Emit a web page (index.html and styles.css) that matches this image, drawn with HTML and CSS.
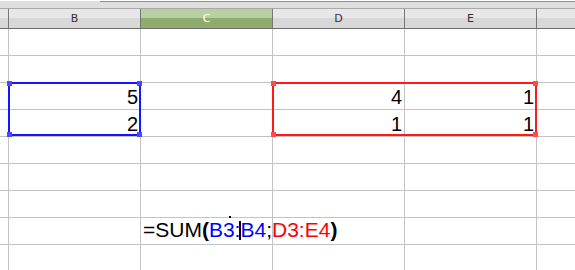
FILE: index.html
```html
<!DOCTYPE html>
<html lang="en">
<head>
  <meta charset="UTF-8" />
  <title>Sheet</title>
  <link rel="stylesheet" href="styles.css">
</head>
<body>
  <div class="topbar"><div class="topbar-edge"></div></div>

  <div class="col-headers">
    <div class="corner"></div>
    <div class="col-head">B</div>
    <div class="col-head active">C</div>
    <div class="col-head">D</div>
    <div class="col-head">E</div>
    <div class="col-head"></div>
  </div>

  <div class="sheet">
    <!-- row 1 -->
    <div class="rowhead"></div><div class="cell"></div><div class="cell"></div><div class="cell"></div><div class="cell"></div><div class="cell"></div>
    <!-- row 2 -->
    <div class="rowhead"></div><div class="cell"></div><div class="cell"></div><div class="cell"></div><div class="cell"></div><div class="cell"></div>
    <!-- row 3 -->
    <div class="rowhead"></div><div class="cell num">5</div><div class="cell"></div><div class="cell num">4</div><div class="cell num">1</div><div class="cell"></div>
    <!-- row 4 -->
    <div class="rowhead"></div><div class="cell num">2</div><div class="cell"></div><div class="cell num">1</div><div class="cell num">1</div><div class="cell"></div>
    <!-- row 5 -->
    <div class="rowhead"></div><div class="cell"></div><div class="cell"></div><div class="cell"></div><div class="cell"></div><div class="cell"></div>
    <!-- row 6 -->
    <div class="rowhead"></div><div class="cell"></div><div class="cell"></div><div class="cell"></div><div class="cell"></div><div class="cell"></div>
    <!-- row 7 -->
    <div class="rowhead"></div><div class="cell"></div><div class="cell"></div><div class="cell"></div><div class="cell"></div><div class="cell"></div>
    <!-- row 8: cell being edited -->
    <div class="rowhead"></div><div class="cell"></div>
    <div class="cell edit">
      <span class="formula">=SUM<b>(</b><span class="ref-b">B3:</span><span class="caret"></span><span class="ref-b">B4</span>;<span class="ref-r">D3:E4</span><b>)</b></span>
    </div>
    <div class="cell"></div><div class="cell"></div><div class="cell"></div>
    <!-- row 9 -->
    <div class="rowhead"></div><div class="cell"></div><div class="cell"></div><div class="cell"></div><div class="cell"></div><div class="cell"></div>

    <!-- range highlights -->
    <div class="range range-blue">
      <span class="handle tl"></span><span class="handle tr"></span><span class="handle bl"></span><span class="handle br"></span>
    </div>
    <div class="range range-red">
      <span class="handle tl"></span><span class="handle tr"></span><span class="handle bl"></span><span class="handle br"></span>
    </div>
    <div class="pointer-dot"></div>
  </div>
</body>
</html>
```

FILE: styles.css
```css
body {
  margin: 0;
  width: 575px;
  height: 270px;
  overflow: hidden;
  background: #fff;
  font-family: "Liberation Sans", Arial, sans-serif;
}

/* Strip above the column headers */
.topbar {
  height: 7px;
  background: #dfdfdf;
  border-bottom: 1px solid #a8a8a8;
}
.topbar-edge {
  margin-left: 100px;
  margin-top: 1px;
  border-top: 1px solid #8f8f8f;
}

/* Column headers */
.col-headers {
  display: grid;
  grid-template-columns: 8px repeat(4, 131px) 1fr;
  column-gap: 1px;
  background: #767676;
  border-bottom: 1px solid #6c6c6c;
  height: 19px;
}
.corner,
.col-head {
  background: linear-gradient(#e7e7e7 0, #e7e7e7 9px, #d8d8d8 9px);
  font-family: "DejaVu Sans", sans-serif;
  font-size: 11px;
  color: #333;
  text-align: center;
  line-height: 19px;
}
.col-head.active {
  background: linear-gradient(#b7cfa1 0, #b7cfa1 9px, #8dac6e 9px);
  color: #fff;
}

/* Cell grid */
.sheet {
  position: relative;
  display: grid;
  grid-template-columns: 8px repeat(4, 131px) 1fr;
  grid-auto-rows: 26px;
  gap: 1px;
  background: #c3c3c3;
}
.rowhead,
.cell {
  background: #fff;
}
.cell {
  font-size: 20px;
  color: #000;
  white-space: nowrap;
}
.num {
  display: flex;
  justify-content: flex-end;
  align-items: flex-end;
  padding-right: 2px;
  line-height: 20px;
  padding-bottom: 2px;
}

/* Cell in edit mode, text spills into the next columns */
.edit {
  position: relative;
  z-index: 2;
  overflow: visible;
  padding-left: 2px;
  font-size: 21px;
  line-height: 23px;
}
.formula b {
  font-weight: bold;
}
.ref-b { color: #0000ff; }
.ref-r { color: #ff0000; }
.caret {
  display: inline-block;
  width: 2px;
  height: 19px;
  background: #000;
  vertical-align: -3px;
  margin: 0 -1px;
}

/* Reference range outlines */
.range {
  position: absolute;
  top: 53px;
  height: 54px;
  box-sizing: border-box;
  border: 2px solid;
  z-index: 3;
}
.range-blue {
  left: 8px;
  width: 133px;
  border-color: #1414ff;
}
.range-red {
  left: 272px;
  width: 265px;
  border-color: #ff1a1a;
}
.handle {
  position: absolute;
  width: 5px;
  height: 5px;
}
.range-blue .handle { background: #4848ff; }
.range-red .handle { background: #ff4c4c; }
.handle.tl { left: -3px; top: -3px; }
.handle.tr { right: -3px; top: -3px; }
.handle.bl { left: -3px; bottom: -3px; }
.handle.br { right: -3px; bottom: -3px; }

.pointer-dot {
  position: absolute;
  left: 229px;
  top: 187px;
  width: 2px;
  height: 2px;
  background: #000;
  z-index: 4;
}
```
